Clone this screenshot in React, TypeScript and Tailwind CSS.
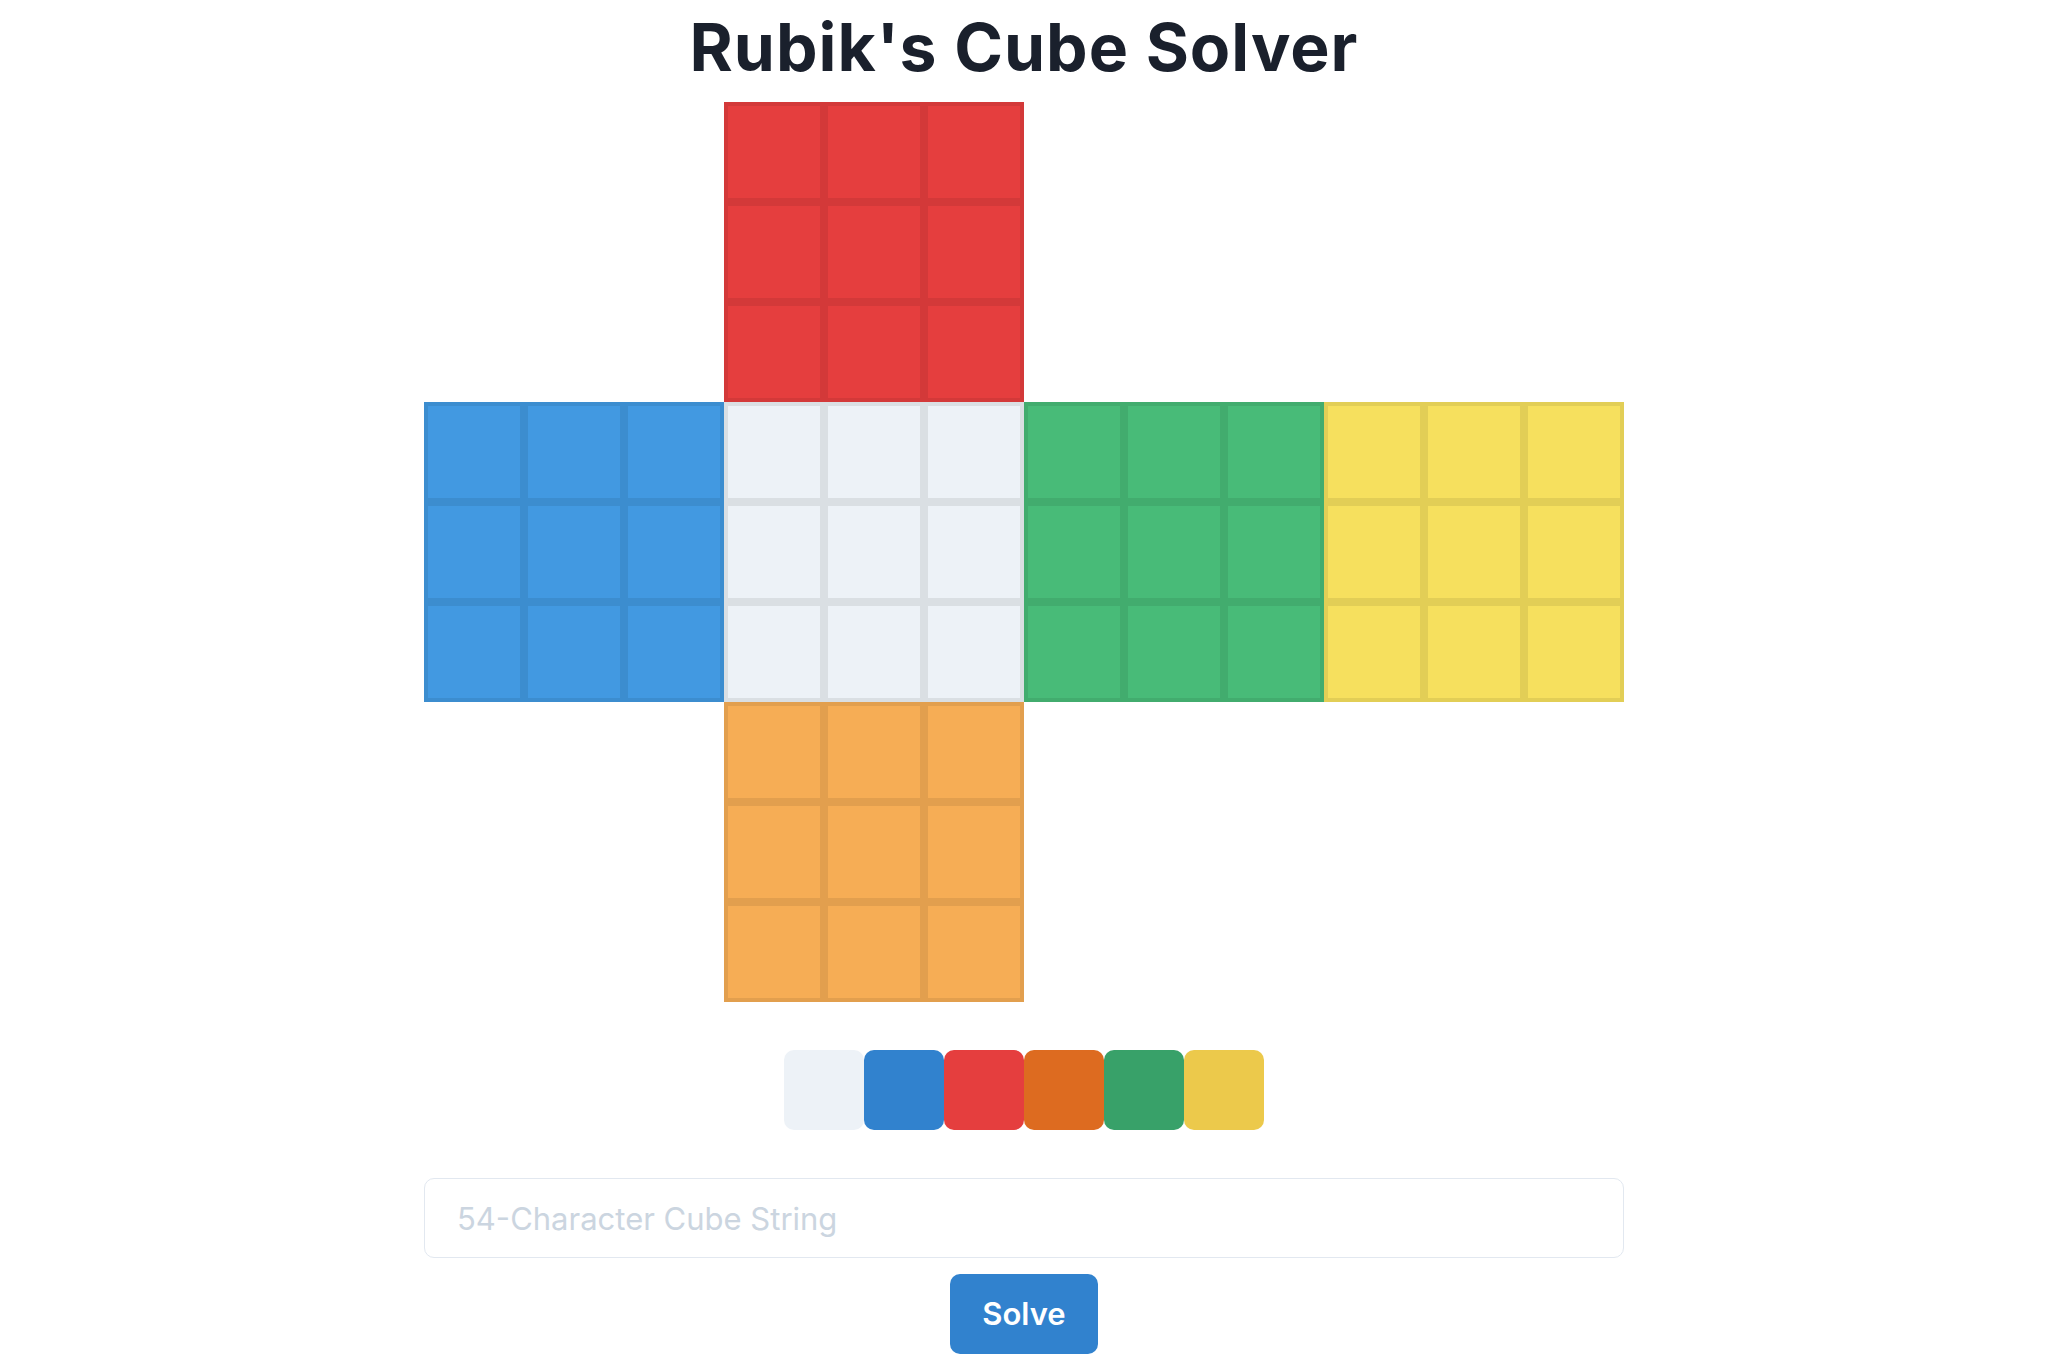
import React from "react";

const faces: { key: string; cls: string; pos: string }[] = [
  { key: "U", cls: "bg-[#E53E3E]", pos: "col-start-2 row-start-1" },
  { key: "L", cls: "bg-[#4299E1]", pos: "col-start-1 row-start-2" },
  { key: "F", cls: "bg-[#EDF2F7]", pos: "col-start-2 row-start-2" },
  { key: "R", cls: "bg-[#48BB78]", pos: "col-start-3 row-start-2" },
  { key: "B", cls: "bg-[#F6E05E]", pos: "col-start-4 row-start-2" },
  { key: "D", cls: "bg-[#F6AD55]", pos: "col-start-2 row-start-3" },
];

const palette = [
  "bg-[#EDF2F7]",
  "bg-[#3182CE]",
  "bg-[#E53E3E]",
  "bg-[#DD6B20]",
  "bg-[#38A169]",
  "bg-[#ECC94B]",
];

export default function App() {
  return (
    <div
      className="min-h-screen bg-white flex flex-col items-center"
      style={{ fontFamily: "Inter, 'Liberation Sans', sans-serif" }}
    >
      <h1 className="h-[93px] flex items-center justify-center text-[66px] font-bold text-[#1A202C] leading-none tracking-[1px]">
        Rubik's Cube Solver
      </h1>
      <div className="mt-[9px] w-[1200px] grid grid-cols-[repeat(4,300px)] grid-rows-[repeat(3,300px)]">
        {faces.map((f) => (
          <div key={f.key} className={`${f.pos} grid grid-cols-3 grid-rows-3`}>
            {Array.from({ length: 9 }).map((_, i) => (
              <div
                key={i}
                className={`${f.cls} w-[100px] h-[100px] border-4 border-black/[0.08]`}
              />
            ))}
          </div>
        ))}
      </div>
      <div className="mt-12 flex">
        {palette.map((c, i) => (
          <button key={i} className={`${c} w-[80px] h-[80px] rounded-[10px]`} />
        ))}
      </div>
      <input
        className="mt-12 w-[1200px] h-[80px] border border-[#E2E8F0] rounded-[10px] px-[32px] text-[31px] text-[#1A202C] placeholder:text-[#CBD5E0] outline-none"
        placeholder="54-Character Cube String"
      />
      <button className="mt-4 w-[148px] h-[80px] rounded-[10px] bg-[#3182CE] text-white text-[31px] font-semibold">
        Solve
      </button>
    </div>
  );
}
